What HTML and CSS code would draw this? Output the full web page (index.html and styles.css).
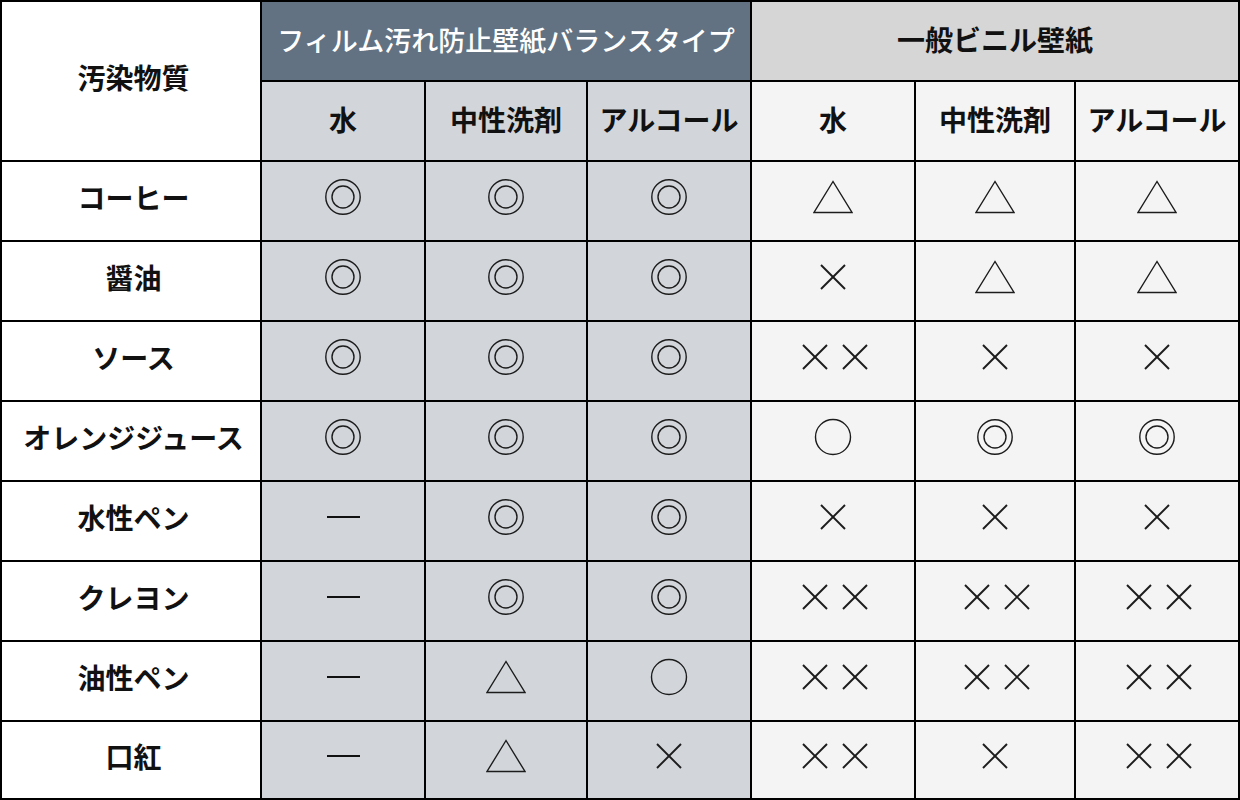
FILE: index.html
```html
<!DOCTYPE html>
<html lang="ja">
<head>
<meta charset="utf-8">
<title>汚染物質 比較表</title>
<link rel="stylesheet" href="styles.css">
</head>
<body>
<svg class="defs" width="0" height="0" aria-hidden="true">
  <defs>
    <g id="dbl"><circle cx="20" cy="20" r="17.2"/><circle cx="20" cy="20" r="11"/></g>
    <g id="circ"><circle cx="20" cy="20" r="17.5"/></g>
    <g id="tri"><polygon points="20,4.5 1,35.5 39,35.5"/></g>
    <g id="x1"><line x1="1" y1="1" x2="25" y2="25"/><line x1="25" y1="1" x2="1" y2="25"/></g>
  </defs>
</svg>
<div class="table">
  <div class="cell head-label">汚染物質</div>
  <div class="cell head-film">フィルム汚れ防止壁紙バランスタイプ</div>
  <div class="cell head-vinyl">一般ビニル壁紙</div>

  <div class="cell sub film">水</div>
  <div class="cell sub film">中性洗剤</div>
  <div class="cell sub film">アルコール</div>
  <div class="cell sub vinyl">水</div>
  <div class="cell sub vinyl">中性洗剤</div>
  <div class="cell sub vinyl">アルコール</div>

  <!-- コーヒー -->
  <div class="cell label">コーヒー</div>
  <div class="cell sym film"><svg class="s40" viewBox="0 0 40 40"><use href="#dbl"/></svg></div>
  <div class="cell sym film"><svg class="s40" viewBox="0 0 40 40"><use href="#dbl"/></svg></div>
  <div class="cell sym film"><svg class="s40" viewBox="0 0 40 40"><use href="#dbl"/></svg></div>
  <div class="cell sym vinyl"><svg class="s40" viewBox="0 0 40 40"><use href="#tri"/></svg></div>
  <div class="cell sym vinyl"><svg class="s40" viewBox="0 0 40 40"><use href="#tri"/></svg></div>
  <div class="cell sym vinyl"><svg class="s40" viewBox="0 0 40 40"><use href="#tri"/></svg></div>

  <!-- 醤油 -->
  <div class="cell label">醤油</div>
  <div class="cell sym film"><svg class="s40" viewBox="0 0 40 40"><use href="#dbl"/></svg></div>
  <div class="cell sym film"><svg class="s40" viewBox="0 0 40 40"><use href="#dbl"/></svg></div>
  <div class="cell sym film"><svg class="s40" viewBox="0 0 40 40"><use href="#dbl"/></svg></div>
  <div class="cell sym vinyl"><svg class="sx" viewBox="0 0 26 26"><use href="#x1"/></svg></div>
  <div class="cell sym vinyl"><svg class="s40" viewBox="0 0 40 40"><use href="#tri"/></svg></div>
  <div class="cell sym vinyl"><svg class="s40" viewBox="0 0 40 40"><use href="#tri"/></svg></div>

  <!-- ソース -->
  <div class="cell label">ソース</div>
  <div class="cell sym film"><svg class="s40" viewBox="0 0 40 40"><use href="#dbl"/></svg></div>
  <div class="cell sym film"><svg class="s40" viewBox="0 0 40 40"><use href="#dbl"/></svg></div>
  <div class="cell sym film"><svg class="s40" viewBox="0 0 40 40"><use href="#dbl"/></svg></div>
  <div class="cell sym vinyl"><span class="pair"><svg class="sx" viewBox="0 0 26 26"><use href="#x1"/></svg><svg class="sx" viewBox="0 0 26 26"><use href="#x1"/></svg></span></div>
  <div class="cell sym vinyl"><svg class="sx" viewBox="0 0 26 26"><use href="#x1"/></svg></div>
  <div class="cell sym vinyl"><svg class="sx" viewBox="0 0 26 26"><use href="#x1"/></svg></div>

  <!-- オレンジジュース -->
  <div class="cell label">オレンジジュース</div>
  <div class="cell sym film"><svg class="s40" viewBox="0 0 40 40"><use href="#dbl"/></svg></div>
  <div class="cell sym film"><svg class="s40" viewBox="0 0 40 40"><use href="#dbl"/></svg></div>
  <div class="cell sym film"><svg class="s40" viewBox="0 0 40 40"><use href="#dbl"/></svg></div>
  <div class="cell sym vinyl"><svg class="s40" viewBox="0 0 40 40"><use href="#circ"/></svg></div>
  <div class="cell sym vinyl"><svg class="s40" viewBox="0 0 40 40"><use href="#dbl"/></svg></div>
  <div class="cell sym vinyl"><svg class="s40" viewBox="0 0 40 40"><use href="#dbl"/></svg></div>

  <!-- 水性ペン -->
  <div class="cell label">水性ペン</div>
  <div class="cell sym film"><span class="dash"></span></div>
  <div class="cell sym film"><svg class="s40" viewBox="0 0 40 40"><use href="#dbl"/></svg></div>
  <div class="cell sym film"><svg class="s40" viewBox="0 0 40 40"><use href="#dbl"/></svg></div>
  <div class="cell sym vinyl"><svg class="sx" viewBox="0 0 26 26"><use href="#x1"/></svg></div>
  <div class="cell sym vinyl"><svg class="sx" viewBox="0 0 26 26"><use href="#x1"/></svg></div>
  <div class="cell sym vinyl"><svg class="sx" viewBox="0 0 26 26"><use href="#x1"/></svg></div>

  <!-- クレヨン -->
  <div class="cell label">クレヨン</div>
  <div class="cell sym film"><span class="dash"></span></div>
  <div class="cell sym film"><svg class="s40" viewBox="0 0 40 40"><use href="#dbl"/></svg></div>
  <div class="cell sym film"><svg class="s40" viewBox="0 0 40 40"><use href="#dbl"/></svg></div>
  <div class="cell sym vinyl"><span class="pair"><svg class="sx" viewBox="0 0 26 26"><use href="#x1"/></svg><svg class="sx" viewBox="0 0 26 26"><use href="#x1"/></svg></span></div>
  <div class="cell sym vinyl"><span class="pair"><svg class="sx" viewBox="0 0 26 26"><use href="#x1"/></svg><svg class="sx" viewBox="0 0 26 26"><use href="#x1"/></svg></span></div>
  <div class="cell sym vinyl"><span class="pair"><svg class="sx" viewBox="0 0 26 26"><use href="#x1"/></svg><svg class="sx" viewBox="0 0 26 26"><use href="#x1"/></svg></span></div>

  <!-- 油性ペン -->
  <div class="cell label">油性ペン</div>
  <div class="cell sym film"><span class="dash"></span></div>
  <div class="cell sym film"><svg class="s40" viewBox="0 0 40 40"><use href="#tri"/></svg></div>
  <div class="cell sym film"><svg class="s40" viewBox="0 0 40 40"><use href="#circ"/></svg></div>
  <div class="cell sym vinyl"><span class="pair"><svg class="sx" viewBox="0 0 26 26"><use href="#x1"/></svg><svg class="sx" viewBox="0 0 26 26"><use href="#x1"/></svg></span></div>
  <div class="cell sym vinyl"><span class="pair"><svg class="sx" viewBox="0 0 26 26"><use href="#x1"/></svg><svg class="sx" viewBox="0 0 26 26"><use href="#x1"/></svg></span></div>
  <div class="cell sym vinyl"><span class="pair"><svg class="sx" viewBox="0 0 26 26"><use href="#x1"/></svg><svg class="sx" viewBox="0 0 26 26"><use href="#x1"/></svg></span></div>

  <!-- 口紅 -->
  <div class="cell label">口紅</div>
  <div class="cell sym film"><span class="dash"></span></div>
  <div class="cell sym film"><svg class="s40" viewBox="0 0 40 40"><use href="#tri"/></svg></div>
  <div class="cell sym film"><svg class="sx" viewBox="0 0 26 26"><use href="#x1"/></svg></div>
  <div class="cell sym vinyl"><span class="pair"><svg class="sx" viewBox="0 0 26 26"><use href="#x1"/></svg><svg class="sx" viewBox="0 0 26 26"><use href="#x1"/></svg></span></div>
  <div class="cell sym vinyl"><svg class="sx" viewBox="0 0 26 26"><use href="#x1"/></svg></div>
  <div class="cell sym vinyl"><span class="pair"><svg class="sx" viewBox="0 0 26 26"><use href="#x1"/></svg><svg class="sx" viewBox="0 0 26 26"><use href="#x1"/></svg></span></div>
</div>
</body>
</html>
```

FILE: styles.css
```css
* {
  box-sizing: border-box;
}

html, body {
  margin: 0;
  padding: 0;
  background: #ffffff;
}

body {
  font-family: "Noto Sans CJK JP", "Noto Sans", sans-serif;
  color: #111111;
}

.defs {
  position: absolute;
  width: 0;
  height: 0;
  overflow: hidden;
}

.table {
  width: 1240px;
  height: 800px;
  display: grid;
  grid-template-columns: 258px 162px 160px 162px 162px 158px 162px;
  grid-template-rows: repeat(9, 78px) 76px;
  gap: 2px;
  padding: 2px;
  background: #000000;
}

.cell {
  display: flex;
  align-items: center;
  justify-content: center;
  font-size: 28px;
  font-weight: 700;
  line-height: 1;
  white-space: nowrap;
}

.head-label {
  grid-row: 1 / span 2;
  background: #ffffff;
  padding-bottom: 8px;
  padding-left: 5px;
}

.head-film {
  grid-column: 2 / span 3;
  background: #627282;
  color: #ffffff;
  font-size: 27px;
  font-weight: 500;
  padding-bottom: 4px;
}

.head-vinyl {
  grid-column: 5 / span 3;
  background: #d6d6d6;
  padding-bottom: 4px;
}

.sub {
  padding-bottom: 4px;
}

.label {
  background: #ffffff;
  padding-bottom: 8px;
  padding-left: 5px;
}

.film {
  background: #d2d6da;
}

.vinyl {
  background: #f4f4f4;
}

.sym {
  padding-bottom: 8px;
}

.s40 {
  width: 40px;
  height: 40px;
  display: block;
  fill: none;
  stroke: #1c1c1c;
  stroke-width: 1.4;
}

.sx {
  width: 26px;
  height: 26px;
  display: block;
  fill: none;
  stroke: #1c1c1c;
  stroke-width: 1.9;
}

.pair {
  display: flex;
  gap: 14px;
  margin-left: 3px;
}

.dash {
  display: block;
  width: 33px;
  height: 2.5px;
  background: #111111;
}
```
